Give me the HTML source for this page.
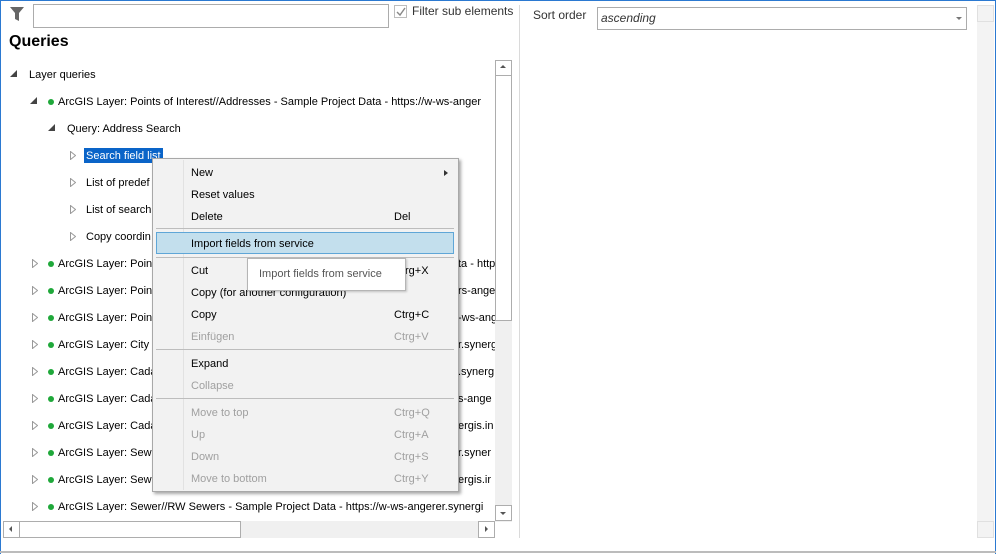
<!DOCTYPE html>
<html><head><meta charset="utf-8"><style>
*{margin:0;padding:0;box-sizing:border-box}
body{width:996px;height:554px;overflow:hidden;background:#fff;font-family:"Liberation Sans",sans-serif;font-size:11px;color:#000;position:relative}
.a{position:absolute;white-space:nowrap}
.row{position:absolute;height:16px;line-height:16px;white-space:nowrap}
.dot{position:absolute;width:6px;height:6px;border-radius:50%;background:#1fa83a}
.op{position:absolute;width:7px;height:7px}
.cl{position:absolute;width:6px;height:9px}
.mi{position:absolute;left:191px;height:18px;line-height:18px}
.sc{position:absolute;left:394px;height:18px;line-height:18px}
.dis{color:#a0a0a0}
.sep{position:absolute;left:156px;width:298px;height:1px;background:#bdbdbd}
</style></head><body>
<div class="a" style="left:0;top:0;width:996px;height:554px;border-left:1px solid #2b79d1;border-right:1px solid #2b79d1;border-top:1px solid #2b79d1"></div>
<div class="a" style="left:0;top:551px;width:996px;height:2px;background:#bcbcbc"></div>
<svg class="a" style="left:9px;top:6px" width="16" height="17"><path d="M1 1H15L10 7V15L6 13V7Z" fill="#666"/></svg>
<div class="a" style="left:33px;top:4px;width:356px;height:24px;border:1px solid #acacac"></div>
<div class="a" style="left:394px;top:5px;width:13px;height:13px;border:1px solid #bdbdbd"></div>
<svg class="a" style="left:396px;top:7px" width="10" height="10"><path d="M1 5L4 8L9 1" stroke="#888" stroke-width="1.4" fill="none"/></svg>
<div class="a" style="left:412px;top:4px;font-size:12px;color:#333">Filter sub elements</div>
<div class="a" style="left:9px;top:33px;font-size:16px;font-weight:bold">Queries</div>
<svg width="0" height="0" style="position:absolute"><defs>
<symbol id="o" viewBox="0 0 7 7"><path d="M7 0V7H0Z" fill="#444"/></symbol>
<symbol id="c" viewBox="0 0 6 9"><path d="M0.5 0.5L5.5 4.5L0.5 8.5Z" fill="none" stroke="#999"/></symbol>
</defs></svg>
<svg class="op" style="left:10px;top:70px"><use href="#o"/></svg><div class="row" style="left:29px;top:67px">Layer queries</div>
<svg class="op" style="left:30px;top:97px"><use href="#o"/></svg><div class="dot" style="left:48px;top:99px"></div><div class="row" style="left:58px;top:94px">ArcGIS Layer: Points of Interest//Addresses - Sample Project Data - https://w-ws-anger</div>
<svg class="op" style="left:48px;top:124px"><use href="#o"/></svg><div class="row" style="left:67px;top:121px">Query: Address Search</div>
<svg class="cl" style="left:70px;top:151px"><use href="#c"/></svg><div class="row" style="left:84px;top:148px;background:#0a64c8;color:#fff;padding:0 2px;height:15px">Search field list</div>
<svg class="cl" style="left:70px;top:178px"><use href="#c"/></svg><div class="row" style="left:86px;top:175px">List of predef</div>
<svg class="cl" style="left:70px;top:205px"><use href="#c"/></svg><div class="row" style="left:86px;top:202px">List of search</div>
<svg class="cl" style="left:70px;top:232px"><use href="#c"/></svg><div class="row" style="left:86px;top:229px">Copy coordin</div>
<svg class="cl" style="left:32px;top:259px"><use href="#c"/></svg><div class="dot" style="left:48px;top:261px"></div><div class="row" style="left:58px;top:256px">ArcGIS Layer: Point</div><div class="row" style="left:458px;top:256px">ta - http</div>
<svg class="cl" style="left:32px;top:286px"><use href="#c"/></svg><div class="dot" style="left:48px;top:288px"></div><div class="row" style="left:58px;top:283px">ArcGIS Layer: Point</div><div class="row" style="left:458px;top:283px">rs-ange</div>
<svg class="cl" style="left:32px;top:313px"><use href="#c"/></svg><div class="dot" style="left:48px;top:315px"></div><div class="row" style="left:58px;top:310px">ArcGIS Layer: Point</div><div class="row" style="left:458px;top:310px">-ws-ang</div>
<svg class="cl" style="left:32px;top:340px"><use href="#c"/></svg><div class="dot" style="left:48px;top:342px"></div><div class="row" style="left:58px;top:337px">ArcGIS Layer: City M</div><div class="row" style="left:458px;top:337px">r.synerg</div>
<svg class="cl" style="left:32px;top:367px"><use href="#c"/></svg><div class="dot" style="left:48px;top:369px"></div><div class="row" style="left:58px;top:364px">ArcGIS Layer: Cada</div><div class="row" style="left:458px;top:364px">.synerg</div>
<svg class="cl" style="left:32px;top:394px"><use href="#c"/></svg><div class="dot" style="left:48px;top:396px"></div><div class="row" style="left:58px;top:391px">ArcGIS Layer: Cada</div><div class="row" style="left:458px;top:391px">s-ange</div>
<svg class="cl" style="left:32px;top:421px"><use href="#c"/></svg><div class="dot" style="left:48px;top:423px"></div><div class="row" style="left:58px;top:418px">ArcGIS Layer: Cada</div><div class="row" style="left:458px;top:418px">ergis.in</div>
<svg class="cl" style="left:32px;top:448px"><use href="#c"/></svg><div class="dot" style="left:48px;top:450px"></div><div class="row" style="left:58px;top:445px">ArcGIS Layer: Sewe</div><div class="row" style="left:458px;top:445px">r.syner</div>
<svg class="cl" style="left:32px;top:475px"><use href="#c"/></svg><div class="dot" style="left:48px;top:477px"></div><div class="row" style="left:58px;top:472px">ArcGIS Layer: Sewe</div><div class="row" style="left:458px;top:472px">ergis.ir</div>
<svg class="cl" style="left:32px;top:502px"><use href="#c"/></svg><div class="dot" style="left:48px;top:504px"></div><div class="row" style="left:58px;top:499px">ArcGIS Layer: Sewer//RW Sewers - Sample Project Data - https://w-ws-angerer.synergi</div>
<div class="a" style="left:495px;top:60px;width:17px;height:462px;background:#f0f0f0"></div>
<div class="a" style="left:495px;top:60px;width:17px;height:16px;border:1px solid #adadad;background:#fff"></div>
<div class="a" style="left:500px;top:65px;width:0;height:0;border-left:3px solid transparent;border-right:3px solid transparent;border-bottom:3px solid #555"></div>
<div class="a" style="left:495px;top:75px;width:17px;height:246px;border:1px solid #adadad;background:#fff"></div>
<div class="a" style="left:495px;top:505px;width:17px;height:16px;border:1px solid #adadad;background:#fff"></div>
<div class="a" style="left:500px;top:512px;width:0;height:0;border-left:3px solid transparent;border-right:3px solid transparent;border-top:3px solid #555"></div>
<div class="a" style="left:3px;top:521px;width:492px;height:17px;background:#f0f0f0"></div>
<div class="a" style="left:3px;top:521px;width:17px;height:17px;border:1px solid #adadad;background:#fff"></div>
<div class="a" style="left:9px;top:526px;width:0;height:0;border-top:3px solid transparent;border-bottom:3px solid transparent;border-right:3px solid #555"></div>
<div class="a" style="left:19px;top:521px;width:222px;height:17px;border:1px solid #adadad;background:#fff"></div>
<div class="a" style="left:478px;top:521px;width:17px;height:17px;border:1px solid #adadad;background:#fff"></div>
<div class="a" style="left:485px;top:526px;width:0;height:0;border-top:3px solid transparent;border-bottom:3px solid transparent;border-left:3px solid #555"></div>
<div class="a" style="left:519px;top:5px;width:1px;height:533px;background:#dadada"></div>
<div class="a" style="left:533px;top:8px;font-size:12px;color:#333">Sort order</div>
<div class="a" style="left:597px;top:7px;width:370px;height:23px;border:1px solid #acacac"></div>
<div class="a" style="left:601px;top:11px;font-size:12px;font-style:italic;color:#333">ascending</div>
<div class="a" style="left:956px;top:17px;width:0;height:0;border-left:3px solid transparent;border-right:3px solid transparent;border-top:3px solid #777"></div>
<div class="a" style="left:977px;top:5px;width:17px;height:533px;background:#f3f3f3"></div>
<div class="a" style="left:977px;top:5px;width:17px;height:17px;border:1px solid #e0e0e0"></div>
<div class="a" style="left:977px;top:521px;width:17px;height:17px;border:1px solid #e0e0e0"></div>
<div class="a" style="left:152px;top:158px;width:307px;height:334px;background:#f2f2f2;border:1px solid #a8a8a8;box-shadow:2px 2px 3px rgba(0,0,0,.35)"></div>
<div class="a" style="left:183px;top:160px;width:1px;height:330px;background:#e2e2e2"></div>
<div class="mi" style="top:164px">New</div><div class="a" style="left:444px;top:170px;width:0;height:0;border-top:3px solid transparent;border-bottom:3px solid transparent;border-left:4px solid #333"></div>
<div class="mi" style="top:186px">Reset values</div>
<div class="mi" style="top:208px">Delete</div><div class="sc" style="top:208px">Del</div>
<div class="sep" style="top:228px"></div>
<div class="a" style="left:156px;top:232px;width:298px;height:22px;background:#c3dfed;border:1px solid #5fa6d7"></div>
<div class="mi" style="top:235px">Import fields from service</div>
<div class="sep" style="top:257px"></div>
<div class="mi" style="top:262px">Cut</div><div class="sc" style="top:262px">Ctrg+X</div>
<div class="mi" style="top:284px">Copy (for another configuration)</div>
<div class="mi" style="top:306px">Copy</div><div class="sc" style="top:306px">Ctrg+C</div>
<div class="mi dis" style="top:328px">Einfügen</div><div class="sc dis" style="top:328px">Ctrg+V</div>
<div class="sep" style="top:349px"></div>
<div class="mi" style="top:355px">Expand</div>
<div class="mi dis" style="top:377px">Collapse</div>
<div class="sep" style="top:398px"></div>
<div class="mi dis" style="top:404px">Move to top</div><div class="sc dis" style="top:404px">Ctrg+Q</div>
<div class="mi dis" style="top:426px">Up</div><div class="sc dis" style="top:426px">Ctrg+A</div>
<div class="mi dis" style="top:448px">Down</div><div class="sc dis" style="top:448px">Ctrg+S</div>
<div class="mi dis" style="top:470px">Move to bottom</div><div class="sc dis" style="top:470px">Ctrg+Y</div>
<div class="a" style="left:247px;top:258px;width:159px;height:33px;background:#fff;border:1px solid #b5b5b5;box-shadow:1px 1px 2px rgba(0,0,0,.2)"></div>
<div class="a" style="left:259px;top:268px;color:#555">Import fields from service</div>
</body></html>
